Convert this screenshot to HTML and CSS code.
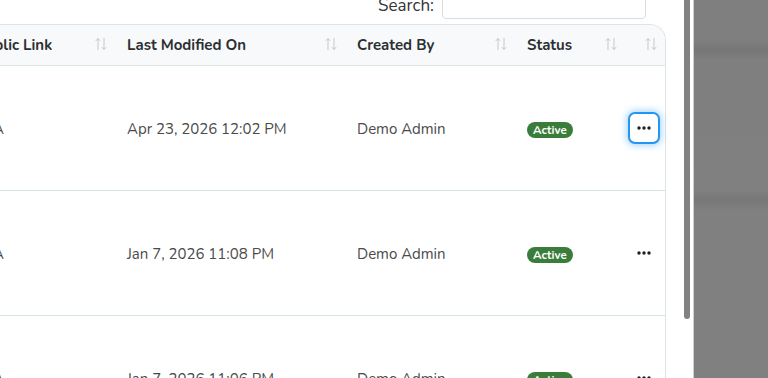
FILE: index.html
```html
<!DOCTYPE html>
<html lang="en">
<head>
    <meta charset="UTF-8">
    <meta name="viewport" content="width=device-width, initial-scale=1.0">
    <title>Links</title>
    <link rel="stylesheet" href="styles.css">
</head>
<body>
    <div class="panel">
        <div class="viewport">
            <div class="content">
                <div class="search-row">
                    <label for="search">Search:</label>
                    <input type="text" id="search">
                </div>
                <table class="list">
                    <colgroup>
                        <col class="c-link">
                        <col class="c-date">
                        <col class="c-user">
                        <col class="c-status">
                        <col class="c-action">
                    </colgroup>
                    <thead>
                        <tr>
                            <th><span class="th-in"><span>Public Link</span><svg class="sort" viewBox="0 0 12 14"><path d="M3 13V1.5M0.8 3.8L3 1.5L5.2 3.8M9 1V12.5M6.8 10.2L9 12.5L11.2 10.2"/></svg></span></th>
                            <th><span class="th-in"><span>Last Modified On</span><svg class="sort" viewBox="0 0 12 14"><path d="M3 13V1.5M0.8 3.8L3 1.5L5.2 3.8M9 1V12.5M6.8 10.2L9 12.5L11.2 10.2"/></svg></span></th>
                            <th><span class="th-in"><span>Created By</span><svg class="sort" viewBox="0 0 12 14"><path d="M3 13V1.5M0.8 3.8L3 1.5L5.2 3.8M9 1V12.5M6.8 10.2L9 12.5L11.2 10.2"/></svg></span></th>
                            <th><span class="th-in"><span>Status</span><svg class="sort" viewBox="0 0 12 14"><path d="M3 13V1.5M0.8 3.8L3 1.5L5.2 3.8M9 1V12.5M6.8 10.2L9 12.5L11.2 10.2"/></svg></span></th>
                            <th class="th-action"><span class="th-in"><span></span><svg class="sort" viewBox="0 0 12 14"><path d="M3 13V1.5M0.8 3.8L3 1.5L5.2 3.8M9 1V12.5M6.8 10.2L9 12.5L11.2 10.2"/></svg></span></th>
                        </tr>
                    </thead>
                    <tbody>
                        <tr>
                            <td class="td-link">NA</td>
                            <td>Apr 23, 2026 12:02 PM</td>
                            <td>Demo Admin</td>
                            <td><span class="badge">Active</span></td>
                            <td class="td-action"><button class="more focused"><svg viewBox="0 0 14 4"><circle cx="2" cy="2" r="1.7"/><circle cx="7" cy="2" r="1.7"/><circle cx="12" cy="2" r="1.7"/></svg></button></td>
                        </tr>
                        <tr>
                            <td class="td-link">NA</td>
                            <td>Jan 7, 2026 11:08 PM</td>
                            <td>Demo Admin</td>
                            <td><span class="badge">Active</span></td>
                            <td class="td-action"><button class="more"><svg viewBox="0 0 14 4"><circle cx="2" cy="2" r="1.7"/><circle cx="7" cy="2" r="1.7"/><circle cx="12" cy="2" r="1.7"/></svg></button></td>
                        </tr>
                        <tr>
                            <td class="td-link">NA</td>
                            <td>Jan 7, 2026 11:06 PM</td>
                            <td>Demo Admin</td>
                            <td><span class="badge">Active</span></td>
                            <td class="td-action"><button class="more"><svg viewBox="0 0 14 4"><circle cx="2" cy="2" r="1.7"/><circle cx="7" cy="2" r="1.7"/><circle cx="12" cy="2" r="1.7"/></svg></button></td>
                        </tr>
                    </tbody>
                </table>
            </div>
        </div>
        <div class="scrollbar"><div class="thumb"></div></div>
    </div>
    <div class="backdrop"></div>
</body>
</html>
```

FILE: styles.css
```css
html, body {
    margin: 0;
    height: 100%;
}
body {
    font-family: "Nunito", "Open Sans", sans-serif;
    font-size: 15px;
    display: flex;
    overflow: hidden;
    background-color: #808080;
}
.panel {
    width: 693px;
    flex-shrink: 0;
    display: flex;
    background-color: #ffffff;
}
.viewport {
    width: 684px;
    overflow: hidden;
}
.content {
    margin-top: -9px;
    width: 701px;
    margin-left: -35px;
}
.search-row {
    display: flex;
    justify-content: flex-end;
    align-items: center;
    gap: 8px;
    padding-right: 20px;
    margin-bottom: 5px;
    color: #333;
    font-size: 17px;
}
.search-row input {
    width: 202px;
    height: 26px;
    padding: 0;
    border: 1px solid #d8dde2;
    border-radius: 4px;
}
.scrollbar {
    width: 6px;
    margin-right: 3px;
}
.thumb {
    height: 319px;
    background-color: #828282;
    border-radius: 0 0 3px 3px;
}
.backdrop {
    flex: 1;
    border-left: 1px solid #c9d2dc;
    background: linear-gradient(180deg, #7f7f7f 0px, #7f7f7f 40px, #767676 50px, #7f7f7f 60px, #808080 190px, #777777 200px, #808080 210px, #808080 100%);
}
table.list {
    table-layout: fixed;
    width: 701px;
    border-collapse: separate;
    border-spacing: 0;
    border: 1px solid #dce6ea;
    border-bottom: none;
    border-radius: 16px 16px 0 0;
}
.c-link { width: 151px; }
.c-date { width: 230px; }
.c-user { width: 170px; }
.c-status { width: 110px; }
.c-action { width: 38px; }
th {
    height: 40px;
    padding: 0 10px;
    background-color: #f8f9fa;
    border-bottom: 1px solid #dce6ea;
    text-align: left;
    font-weight: 700;
    color: #2b2f33;
}
th:first-child {
    border-top-left-radius: 16px;
}
th:last-child {
    border-top-right-radius: 16px;
}
.th-in {
    display: flex;
    justify-content: space-between;
    align-items: center;
}
.th-action {
    padding: 0 8px 0 10px;
}
.sort {
    width: 12px;
    height: 14px;
    margin-top: -2px;
    fill: none;
    stroke: #c3c8cd;
    stroke-width: 1;
}
td {
    height: 122px;
    padding: 2px 10px 0;
    border-bottom: 1px solid #d5e3e9;
    color: #4a4a4a;
}
td.td-link {
    padding-left: 16px;
}
.td-action {
    padding: 0;
}
.badge {
    display: inline-block;
    padding: 0 6px;
    height: 16px;
    line-height: 16px;
    border-radius: 8px;
    background-color: #3a7d3a;
    color: #ffffff;
    font-size: 11.5px;
    font-weight: 700;
    vertical-align: middle;
}
.more {
    width: 32px;
    height: 32px;
    margin: -1px 0 0 1px;
    padding: 0;
    display: flex;
    align-items: center;
    justify-content: center;
    background-color: #ffffff;
    border: 2px solid transparent;
    border-radius: 7px;
    cursor: pointer;
}
.more svg {
    width: 14px;
    height: 4px;
    fill: #1f1f1f;
}
.more.focused {
    border-color: #2196f3;
    box-shadow: 0 0 6px 2px rgba(33, 150, 243, 0.35);
}
```
